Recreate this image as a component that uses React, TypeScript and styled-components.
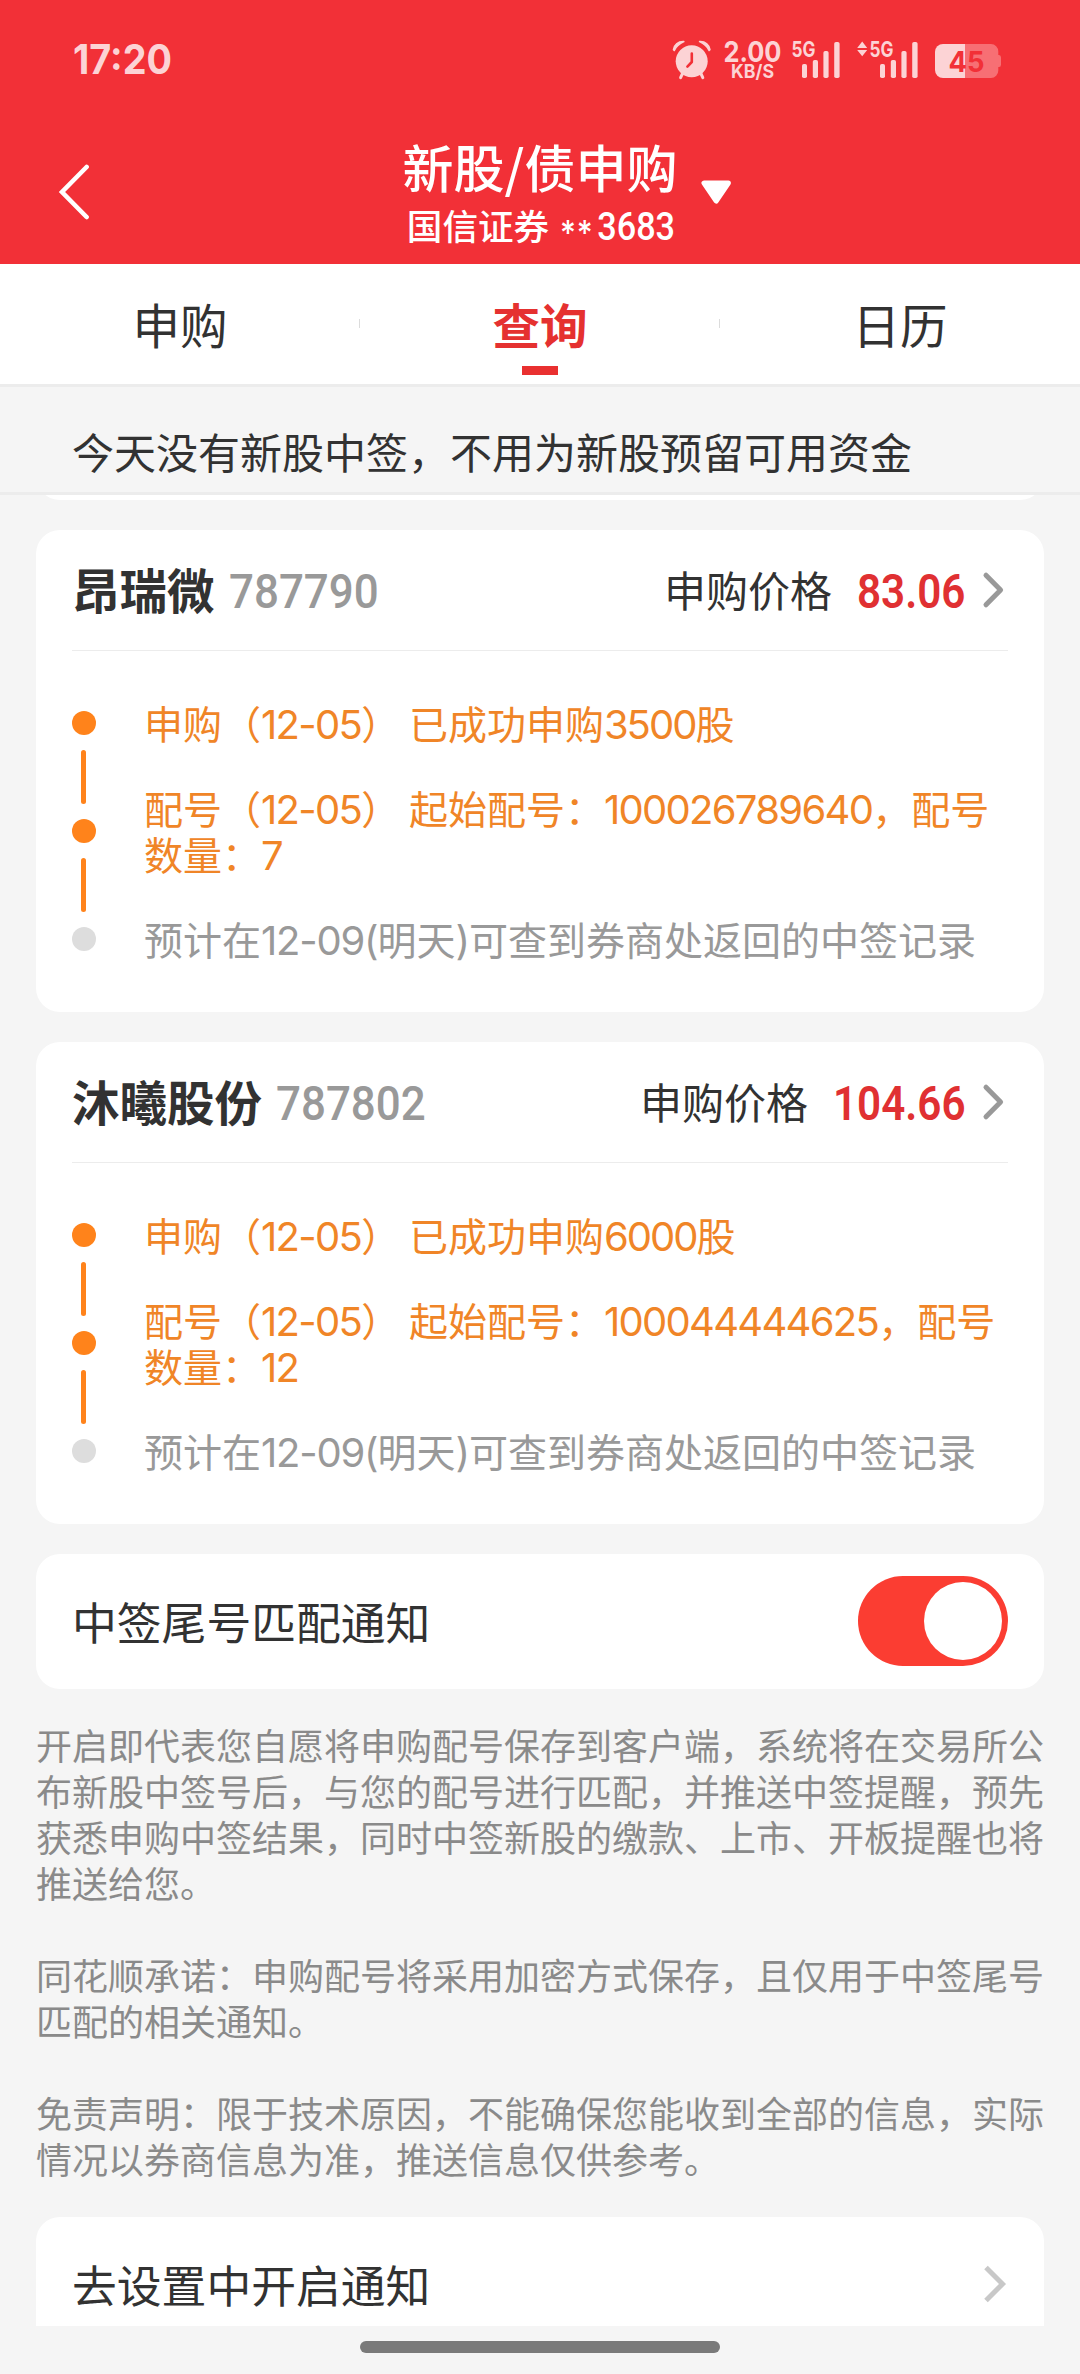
import React from "react";
import styled, { createGlobalStyle } from "styled-components";

const cjk = `"Noto Sans CJK SC", "Noto Sans", sans-serif`;
const latin = `Inter, "Noto Sans CJK SC", sans-serif`;
const din = `Roboto, "Noto Sans CJK SC", sans-serif`;

const colors = {
  brand: "#f23037",
  status: "#fcd3d5",
  statusDim: "#f76f74",
  page: "#f5f5f5",
  line: "#ececec",
  ink: "#323232",
  muted: "#999999",
  orange: "#ff831b",
  orangeText: "#f08527",
  red: "#e03032",
};

const GlobalStyle = createGlobalStyle`
  * { box-sizing: border-box; }
  html, body { margin: 0; padding: 0; background: ${colors.page}; }
  body { font-family: ${cjk}; color: ${colors.ink}; }
`;

const Screen = styled.div`
  width: 1080px;
  height: 2374px;
  display: flex;
  flex-direction: column;
  overflow: hidden;
  background: ${colors.page};
`;

const TopArea = styled.header`
  height: 264px;
  flex: none;
  background: ${colors.brand};
  display: flex;
  flex-direction: column;
`;

const StatusBar = styled.div`
  height: 120px;
  padding: 41px 79px 0 74px;
  display: flex;
  justify-content: space-between;
  align-items: flex-start;
`;

const StatusIcons = styled.div`
  display: flex;
  height: 38px;
`;

const StatusSvg = styled.svg<{ $gap?: number }>`
  display: block;
  height: 38px;
  overflow: visible;
  margin-left: ${(p) => p.$gap ?? 0}px;
  font-family: ${latin};
`;

const NavBar = styled.div`
  height: 144px;
  display: grid;
  grid-template-columns: 405px 270px 405px;
`;

const BackButton = styled.button`
  border: 0;
  background: none;
  padding: 44px 0 0 57px;
  display: flex;
  align-items: flex-start;
`;

const NavTitles = styled.div`
  display: flex;
  flex-direction: column;
  align-items: center;
  padding-top: 14px;
  color: #fff;
  white-space: nowrap;
`;

const NavTitle = styled.h1`
  margin: 0;
  font-size: 51px;
  line-height: 64px;
  font-weight: 500;
`;

const NavSubtitle = styled.div`
  display: flex;
  align-items: center;
  gap: 11px;
  padding-top: 3px;
  font-size: 35.6px;
  line-height: 46px;
  font-weight: 500;
`;

const CaretSlot = styled.div`
  padding: 59px 0 0 25px;
`;

const Squeezed = styled.span<{ $w: number; $scale: number; $size: number; $weight?: number; $color?: string }>`
  display: inline-block;
  width: ${(p) => p.$w}px;
  white-space: nowrap;
  transform: translateY(3px) scaleX(${(p) => p.$scale});
  transform-origin: left center;
  font-family: ${din};
  font-size: ${(p) => p.$size}px;
  font-weight: ${(p) => p.$weight ?? 400};
  color: ${(p) => p.$color ?? "inherit"};
`;

const Mask = styled.span`
  font-family: ${latin};
  font-size: 34px;
  margin-right: 4px;
  letter-spacing: 1px;
  display: inline-block;
  transform: translateY(5px);
`;

const Tabs = styled.nav`
  height: 123px;
  flex: none;
  background: #fff;
  border-bottom: 3px solid ${colors.line};
  display: grid;
  grid-template-columns: repeat(3, 1fr);
`;

const Tab = styled.div<{ $active?: boolean }>`
  display: flex;
  flex-direction: column;
  align-items: center;
  padding-top: 25px;
  font-size: 47.5px;
  line-height: 70px;
  font-weight: ${(p) => (p.$active ? 700 : 400)};
  color: ${(p) => (p.$active ? "#e53130" : colors.ink)};
  background: linear-gradient(#dcdcdc, #dcdcdc) right 55px / 1px 9px no-repeat;
  &:last-child { background: none; }
`;

const TabUnderline = styled.span`
  width: 36px;
  height: 9px;
  margin-top: 7px;
  background: #e93030;
`;

const Notice = styled.div`
  height: 108px;
  flex: none;
  padding: 34px 72px 0;
  border-bottom: 3px solid ${colors.line};
  font-size: 42px;
  line-height: 60px;
  white-space: nowrap;
`;

const ScrollArea = styled.main`
  height: 1831px;
  flex: none;
  overflow: hidden;
  padding: 0 36px;
  display: flex;
  flex-direction: column;
`;

const PreviousCard = styled.div`
  height: 5px;
  flex: none;
  overflow: hidden;
  display: flex;
  align-items: flex-end;
  &::before {
    content: "";
    flex: 1;
    height: 60px;
    background: #fff;
    border-radius: 24px;
  }
`;

const Card = styled.section`
  flex: none;
  margin-top: 30px;
  padding: 0 36px;
  background: #fff;
  border-radius: 24px;
`;

const CardHead = styled.div`
  height: 121px;
  padding-bottom: 2px;
  border-bottom: 1px solid ${colors.line};
  display: flex;
  align-items: center;
  justify-content: space-between;
  line-height: 60px;
`;

const HeadGroup = styled.div`
  display: flex;
  align-items: center;
`;

const StockName = styled.span`
  font-size: 47.5px;
  font-weight: 700;
  margin-right: 14px;
`;

const PriceLabel = styled.span`
  font-size: 42px;
  margin-right: 25px;
`;

const HeadChevron = styled.span`
  display: flex;
  margin: 2px 0 0 14px;
`;

const CardBody = styled.div`
  height: 361px;
  display: flex;
`;

const Rail = styled.div`
  width: 24px;
  padding-top: 60px;
  display: flex;
  flex-direction: column;
  align-items: center;
  gap: 15px;
`;

const Dot = styled.i<{ $done?: boolean }>`
  width: 24px;
  height: 24px;
  border-radius: 50%;
  background: ${(p) => (p.$done ? colors.orange : "#dddddd")};
`;

const Link = styled.i`
  width: 5px;
  height: 54px;
  margin-right: 1px;
  border-radius: 3px;
  background: ${colors.orange};
`;

const Steps = styled.div`
  flex: 1;
  padding: 48px 0 0 48px;
  display: flex;
  flex-direction: column;
  gap: 39px;
  font-size: 39px;
  line-height: 46px;
  white-space: nowrap;
`;

const Step = styled.div<{ $done?: boolean }>`
  color: ${(p) => (p.$done ? colors.orangeText : colors.muted)};
`;

const Line = styled.div`
  height: 46px;
`;

const Num = styled.span<{ $ls?: number }>`
  font-family: ${latin};
  font-size: 40px;
  line-height: 1;
  letter-spacing: ${(p) => p.$ls ?? -1.7}px;
`;

const SettingRow = styled(Card)<{ $cut?: boolean }>`
  height: 135px;
  padding-bottom: 2px;
  display: flex;
  align-items: center;
  justify-content: space-between;
  font-size: 44.8px;
  line-height: 60px;
  margin-top: ${(p) => (p.$cut ? 0 : 30)}px;
`;

const Toggle = styled.span`
  width: 150px;
  height: 90px;
  margin-top: 1px;
  padding: 6px;
  border-radius: 45px;
  background: #fb3d32;
  display: flex;
  justify-content: flex-end;
  &::after {
    content: "";
    width: 78px;
    height: 78px;
    border-radius: 50%;
    background: #fff;
  }
`;

const Terms = styled.div`
  flex: none;
  height: 528px;
  padding-top: 32px;
  display: flex;
  flex-direction: column;
  gap: 46px;
  color: #8a8a8a;
  font-size: 36px;
  line-height: 46px;
  white-space: nowrap;
`;

const GestureBar = styled.footer`
  height: 48px;
  flex: none;
  padding-top: 15px;
  display: flex;
  justify-content: center;
  &::after {
    content: "";
    width: 360px;
    height: 12px;
    border-radius: 6px;
    background: #7a7a7a;
  }
`;

const Clock = () => (
  <StatusSvg width="100" viewBox="0 0 100 38">
    <text x="-1" y="33.3" fontSize="41" fontWeight="700" fill={colors.status} textLength="99" lengthAdjust="spacingAndGlyphs">
      17:20
    </text>
  </StatusSvg>
);

const AlarmIcon = () => (
  <StatusSvg width="38" viewBox="0 0 38 38" fill={colors.status}>
    <circle cx="18.7" cy="20.3" r="16" />
    <path d="M0.5 8.6 C1 4 5 0.3 10.8 0.6 C6.5 2.6 3 5.6 1.3 9.4 Z" stroke={colors.status} strokeWidth="1.6" strokeLinejoin="round" />
    <path d="M36.9 8.6 C36.4 4 32.4 0.3 26.6 0.6 C30.9 2.6 34.4 5.6 36.1 9.4 Z" stroke={colors.status} strokeWidth="1.6" strokeLinejoin="round" />
    <path d="M9.5 32.5 L7.6 36.6 M27.9 32.5 L29.8 36.6" stroke={colors.status} strokeWidth="3" strokeLinecap="round" />
    <path d="M18.8 12.6 V21 L14.4 25.6" stroke={colors.brand} strokeWidth="2.6" strokeLinecap="round" strokeLinejoin="round" fill="none" />
  </StatusSvg>
);

const NetSpeed = () => (
  <StatusSvg $gap={13} width="57" viewBox="0 0 57 38" fill={colors.status}>
    <text x="-0.5" y="21.4" fontSize="28.5" fontWeight="700" textLength="58" lengthAdjust="spacingAndGlyphs">2.00</text>
    <text x="7" y="36.6" fontSize="18.5" fontWeight="700" textLength="43" lengthAdjust="spacingAndGlyphs">KB/S</text>
  </StatusSvg>
);

const Signal = ({ arrows = false, gap }: { arrows?: boolean; gap: number }) => {
  const dx = arrows ? 13 : 0;
  return (
    <StatusSvg $gap={gap} width={48 + dx} viewBox={`0 0 ${48 + dx} 38`} fill={colors.status}>
      {arrows && <path d="M5.2 0.6 L10.2 7 H0.2 Z M0.2 9 H10.2 L5.2 15.2 Z" />}
      <g transform={`translate(${dx} 0)`}>
        <text x="-0.5" y="15.8" fontSize="21.5" fontWeight="700" textLength="24" lengthAdjust="spacingAndGlyphs">5G</text>
        <rect x="10" y="23" width="5" height="14" rx="1.8" />
        <rect x="20.8" y="19" width="5.2" height="18" rx="1.8" />
        <rect x="31.4" y="10" width="5.2" height="27" rx="1.8" />
        <rect x="42.2" y="1" width="5.4" height="36" rx="1.8" />
      </g>
    </StatusSvg>
  );
};

const Battery = () => (
  <StatusSvg $gap={17} width="66" viewBox="0 0 66 38">
    <path d="M55 3 H56 A7.5 7.5 0 0 1 63.3 10.5 V14 H64 Q66 14 66 16.5 V23.5 Q66 26 64 26 H63.3 V29.5 A7.5 7.5 0 0 1 56 37 H30 V3 Z" fill={colors.statusDim} />
    <path d="M8 3 H30 V37 H8 A8 8 0 0 1 0 29 V11 A8 8 0 0 1 8 3 Z" fill={colors.status} />
    <text x="13.4" y="31" fontSize="29" fontWeight="700" fill={colors.brand} textLength="36" lengthAdjust="spacingAndGlyphs">45</text>
  </StatusSvg>
);

const Chevron = ({ color, large = false }: { color: string; large?: boolean }) => (
  <svg width={large ? 24 : 26} height="40" viewBox={large ? "0 0 24 40" : "0 0 26 40"} fill="none" stroke={color} strokeWidth="5" strokeLinecap={large ? "butt" : "round"} strokeLinejoin={large ? "miter" : "round"}>
    <path d={large ? "M2 3.5 L18.5 20 L2 36.5" : "M4 5.2 L18.6 20 L4 34.8"} />
  </svg>
);

interface Stock {
  name: string;
  code: string;
  price: string;
  priceWidth: number;
  shares: string;
  allotStart: string;
  allotCount: string;
}

const stocks: Stock[] = [
  { name: "昂瑞微", code: "787790", price: "83.06", priceWidth: 111, shares: "3500", allotStart: "100026789640", allotCount: "7" },
  { name: "沐曦股份", code: "787802", price: "104.66", priceWidth: 135, shares: "6000", allotStart: "100044444625", allotCount: "12" },
];

const StockCard = ({ stock }: { stock: Stock }) => (
  <Card>
    <CardHead>
      <HeadGroup>
        <StockName>{stock.name}</StockName>
        <Squeezed $w={150} $scale={0.905} $size={48.5} $weight={500} $color={colors.muted}>{stock.code}</Squeezed>
      </HeadGroup>
      <HeadGroup>
        <PriceLabel>申购价格</PriceLabel>
        <Squeezed $w={stock.priceWidth} $scale={0.87} $size={48.5} $weight={600} $color={colors.red}>{stock.price}</Squeezed>
        <HeadChevron>
          <Chevron color={colors.muted} />
        </HeadChevron>
      </HeadGroup>
    </CardHead>
    <CardBody>
      <Rail>
        <Dot $done />
        <Link />
        <Dot $done />
        <Link />
        <Dot />
      </Rail>
      <Steps>
        <Step $done>
          <Line>申购（<Num>12-05</Num>） 已成功申购<Num $ls={-2}>{stock.shares}</Num>股</Line>
        </Step>
        <Step $done>
          <Line>配号（<Num>12-05</Num>） 起始配号：<Num>{stock.allotStart}</Num>，配号</Line>
          <Line>数量：<Num>{stock.allotCount}</Num></Line>
        </Step>
        <Step>
          <Line>预计在<Num $ls={-1.2}>12-09(</Num>明天<Num $ls={-1.2}>)</Num>可查到券商处返回的中签记录</Line>
        </Step>
      </Steps>
    </CardBody>
  </Card>
);

const terms = [
  ["开启即代表您自愿将申购配号保存到客户端，系统将在交易所公", "布新股中签号后，与您的配号进行匹配，并推送中签提醒，预先", "获悉申购中签结果，同时中签新股的缴款、上市、开板提醒也将", "推送给您。"],
  ["同花顺承诺：申购配号将采用加密方式保存，且仅用于中签尾号", "匹配的相关通知。"],
  ["免责声明：限于技术原因，不能确保您能收到全部的信息，实际", "情况以券商信息为准，推送信息仅供参考。"],
];

export default function App() {
  return (
    <>
      <GlobalStyle />
      <Screen lang="zh-CN">
        <TopArea>
          <StatusBar>
            <Clock />
            <StatusIcons>
              <AlarmIcon />
              <NetSpeed />
              <Signal gap={11} />
              <Signal gap={17} arrows />
              <Battery />
            </StatusIcons>
          </StatusBar>
          <NavBar>
            <BackButton aria-label="返回">
              <svg width="34" height="56" viewBox="0 0 34 56" fill="none" stroke="#fff" strokeWidth="4.6" strokeLinecap="round">
                <path d="M29.6 3 L5 28 L29.6 53" />
              </svg>
            </BackButton>
            <NavTitles>
              <NavTitle>新股/债申购</NavTitle>
              <NavSubtitle>
                <span>国信证券</span>
                <Squeezed $w={113} $scale={0.9} $size={38} $weight={500}><Mask>**</Mask>3683</Squeezed>
              </NavSubtitle>
            </NavTitles>
            <CaretSlot>
              <svg width="32" height="26" viewBox="0 0 32 26" fill="#fff" stroke="#fff" strokeWidth="5" strokeLinejoin="round">
                <path d="M4 4 H28.4 L16.2 22 Z" />
              </svg>
            </CaretSlot>
          </NavBar>
        </TopArea>
        <Tabs>
          <Tab>申购</Tab>
          <Tab $active>
            查询
            <TabUnderline />
          </Tab>
          <Tab>日历</Tab>
        </Tabs>
        <Notice>今天没有新股中签，不用为新股预留可用资金</Notice>
        <ScrollArea>
          <PreviousCard />
          {stocks.map((s) => (
            <StockCard key={s.code} stock={s} />
          ))}
          <SettingRow>
            中签尾号匹配通知
            <Toggle />
          </SettingRow>
          <Terms>
            {terms.map((paragraph) => (
              <div key={paragraph[0]}>
                {paragraph.map((line) => (
                  <Line key={line}>{line}</Line>
                ))}
              </div>
            ))}
          </Terms>
          <SettingRow $cut>
            去设置中开启通知
            <Chevron color="#c8c8c8" large />
          </SettingRow>
        </ScrollArea>
        <GestureBar />
      </Screen>
    </>
  );
}
